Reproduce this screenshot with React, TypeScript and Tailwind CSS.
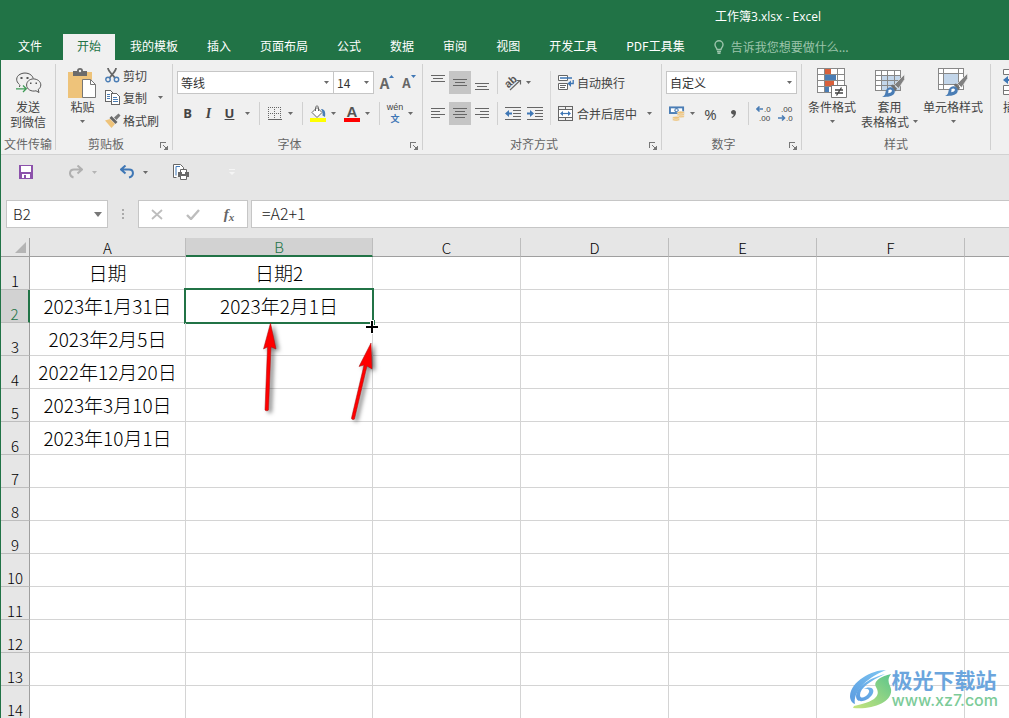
import React, { useState } from 'react'
import { clsx } from 'clsx'

const TABS = ['开始', '我的模板', '插入', '页面布局', '公式', '数据', '审阅', '视图', '开发工具', 'PDF工具集']
const COLUMNS = ['A', 'B', 'C', 'D', 'E', 'F', '']
const ROW_COUNT = 14

const CELLS: Record<string, string> = {
  A1: '日期',
  B1: '日期2',
  A2: '2023年1月31日',
  B2: '2023年2月1日',
  A3: '2023年2月5日',
  A4: '2022年12月20日',
  A5: '2023年3月10日',
  A6: '2023年10月1日',
}

function Caret({ className = 'text-[#6a6a6a]' }: { className?: string }) {
  return (
    <svg width="5" height="3" viewBox="0 0 5 3" className={className} aria-hidden="true">
      <path d="M0 0h5L2.5 3z" fill="currentColor" />
    </svg>
  )
}

function CaretButton({ label, className }: { label: string; className?: string }) {
  return (
    <button aria-label={label} className={clsx('flex h-[23px] w-[14px] shrink-0 items-center justify-center', className)}>
      <Caret />
    </button>
  )
}

function Sep({ className = 'ml-1' }: { className?: string }) {
  return <div className={clsx('mr-[7px] h-[23px] w-px shrink-0 bg-[#d0d0d0]', className)} />
}

function IconButton({ label, children, className = 'w-4' }: { label: string; children: React.ReactNode; className?: string }) {
  return (
    <button aria-label={label} className={clsx('flex h-[23px] shrink-0 items-center justify-center', className)}>
      {children}
    </button>
  )
}

interface GroupProps {
  title: string
  className: string
  launcher?: boolean
  children: React.ReactNode
}

function Group({ title, className, launcher = true, children }: GroupProps) {
  return (
    <section className={clsx('relative flex h-[86px] shrink-0 flex-col border-r border-[#d0d0d0]', className)}>
      <div className="min-h-0 flex-1">{children}</div>
      <h2 className={clsx('text-center text-xs leading-3 whitespace-nowrap text-[#666]', launcher && 'pr-4')}>{title}</h2>
      {launcher && (
        <button aria-label={title + '设置'} className="absolute right-1 bottom-0">
          <svg width="8" height="8" viewBox="0 0 8 8" fill="none" stroke="#777" shapeRendering="crispEdges">
            <path d="M.5 6V.5H6M3 3l3 3M7.5 3.500v4H3.500" />
            <path d="M7 4v3H4z" fill="#777" stroke="none" />
          </svg>
        </button>
      )}
    </section>
  )
}

function Select({ label, value, className }: { label: string; value: string; className: string }) {
  return (
    <div className={clsx('relative h-[23px] shrink-0', className)}>
      <select aria-label={label} className="h-full w-full appearance-none border border-[#c6c6c6] bg-white pl-[3px] text-[#333]">
        <option>{value}</option>
      </select>
      <span className="pointer-events-none absolute inset-y-0 right-[5px] flex items-center">
        <Caret />
      </span>
    </div>
  )
}

// horizontal rules of an alignment icon, each one as [x, width]
function Lines({ rows, top }: { rows: [number, number][]; top: number }) {
  return (
    <svg width="14" height="15" viewBox="0 0 14 15" fill="#666" shapeRendering="crispEdges">
      {rows.map(([x, w], i) => (
        <rect key={i} x={x} y={top + i * 3} width={w} height="1" />
      ))}
    </svg>
  )
}

function WeChatIcon() {
  return (
    <svg width="27" height="24" viewBox="0 0 27 24" fill="none">
      <path d="M4.500 12.500C.5 9.500.8 4.500 5 2.300 10-.5 17 1.500 18.300 6.500M5 13l-.6 2" stroke="#555" />
      <path d="M18.500 6.900c4 .1 7.300 2.700 7.300 6 0 1.900-1 3.500-2.600 4.600l.8 3-3-1.700c-4.700 1.200-9.400-1.500-9.400-5.800 0-3.400 3-6.100 6.900-6.100z" stroke="#555" />
      <path d="M5.500 5h2v2h-2zM11.500 5h2v2h-2zM15 10.500h1.500V12H15zM20.500 10.500H22V12h-1.500z" fill="#555" />
      <path d="M1 16.800h10M8 13.500l3.300 3.300L8 20" stroke="#3f9b56" strokeWidth="1.300" />
    </svg>
  )
}

function PasteIcon() {
  return (
    <svg width="29" height="31" viewBox="0 0 29 31">
      <path d="M0 4h24v26H0z" fill="#eec37a" />
      <path d="M5 8V3h4a3 3 0 0 1 6 0h4v5z" fill="#6b6b6b" />
      <circle cx="12" cy="3" r="1.200" fill="#f0f0f0" />
      <path d="M14.500 11.500h8l5 5v13h-13z" fill="#fff" stroke="#777" />
      <path d="M22.500 11.500v5h5" fill="none" stroke="#777" />
    </svg>
  )
}

function CutIcon() {
  return (
    <svg width="15" height="16" viewBox="0 0 15 16" fill="none">
      <path d="M3 1c0 3 4 6 7 10M11 1C11 4 8 6 4.500 11" stroke="#666" strokeWidth="1.800" />
      <circle cx="3" cy="12.500" r="2.200" stroke="#4a7db5" strokeWidth="1.400" />
      <circle cx="11.500" cy="12.500" r="2.200" stroke="#4a7db5" strokeWidth="1.400" />
    </svg>
  )
}

function CopyIcon() {
  return (
    <svg width="16" height="15" viewBox="0 0 16 15" shapeRendering="crispEdges">
      <path d="M.5.5h5l3 3v8h-8z" fill="#fff" stroke="#666" />
      <path d="M2 4.500h3M2 6.500h3M2 8.500h3" stroke="#4a7db5" />
      <path d="M6.500 3.500h5l3 3v8h-8z" fill="#fff" stroke="#666" />
      <path d="M8 7.500h4M8 9.500h5M8 11.500h5" stroke="#4a7db5" />
    </svg>
  )
}

function PainterIcon() {
  return (
    <svg width="16" height="15" viewBox="0 0 16 15">
      <path d="M0 7.500 5 6l5 5-3.500 4z" fill="#eec37a" />
      <path d="m4.500 5 2-2 6 6-2 2z" fill="#666" />
      <path d="m9 4.500 4.500-4 2 2-4 4.500z" fill="#777" />
    </svg>
  )
}

function BucketIcon() {
  return (
    <svg width="16" height="17" viewBox="0 0 16 17">
      <path d="m2 7.500 5-5 5 5-5 5z" fill="#fff" stroke="#666" />
      <path d="M5.500 6V2.500c0-2 3-2 3 0V6" fill="none" stroke="#666" />
      <path d="M11 4c3 0 5 2 4 8l-2.500-1.500c.5-3-.5-5-1.500-6.500z" fill="#4a7db5" />
      <path d="M0 13h16v4H0z" fill="#ff0" />
    </svg>
  )
}

function MoneyIcon() {
  return (
    <svg width="17" height="17" viewBox="0 0 17 17">
      <path d="M0 1h16v8H0z" fill="#4a7db5" />
      <path d="M2 3h12v4H2z" fill="#fff" />
      <circle cx="8" cy="5" r="2.300" fill="#4a7db5" />
      <path d="M7 4h2v2H7z" fill="#fff" />
      <g fill="#eec37a" stroke="#f0f0f0" strokeWidth=".6">
        <ellipse cx="12.500" cy="11.500" rx="3.800" ry="1.600" />
        <ellipse cx="12.500" cy="9.500" rx="3.800" ry="1.600" />
        <ellipse cx="12.500" cy="7.500" rx="3.800" ry="1.600" />
        <ellipse cx="7.500" cy="15" rx="3.800" ry="1.600" />
        <ellipse cx="7.500" cy="13" rx="3.800" ry="1.600" />
      </g>
    </svg>
  )
}

function DecimalIcon({ increase }: { increase?: boolean }) {
  return (
    <svg width="16" height="19" viewBox="0 0 16 19" fontFamily="Liberation Sans, sans-serif" fontSize="8" fill="#444">
      <text x={increase ? 8 : 3} y="8">{increase ? '.0' : '.00'}</text>
      <text x={increase ? 3 : 8} y="17">{increase ? '.00' : '.0'}</text>
      {increase ? (
        <path d="M3.500 2.500 1 5l2.500 2.500M1 5h6" stroke="#4a7db5" strokeWidth="1.600" fill="none" />
      ) : (
        <path d="M4 11.500 6.500 14 4 16.500M0 14h6.500" stroke="#4a7db5" strokeWidth="1.600" fill="none" />
      )}
    </svg>
  )
}

function IndentIcon({ outward }: { outward?: boolean }) {
  return (
    <svg width="16" height="14" viewBox="0 0 16 14">
      <path d="M0 .5h16M8 3.500h8M8 6.500h8M8 9.500h8M0 12.500h16" stroke="#666" shapeRendering="crispEdges" />
      <path d={outward ? 'M0 6.500 4 3v2.500h3v2H4V10z' : 'M7 6.500 3 3v2.500H0v2h3V10z'} fill="#3f77b5" />
    </svg>
  )
}

function WrapIcon() {
  return (
    <svg width="16" height="16" viewBox="0 0 16 16" fill="none">
      <path d="M.5.5h9v5h-9z" stroke="#666" fill="#fff" />
      <path d="M.5 8.500h9v6h-9z" stroke="#666" fill="#fff" />
      <path d="M2 10.500h6M2 12.500h5" stroke="#666" />
      <path d="M2 3h12M15.200 5v3.500H11" stroke="#3f77b5" strokeWidth="1.300" />
      <path d="m9.500 8.500 3.500-3V12z" fill="#3f77b5" />
    </svg>
  )
}

function MergeIcon() {
  return (
    <svg width="16" height="16" viewBox="0 0 16 16" fill="none">
      <path d="M.5.5h14v14H.5zM.5 3.500h14M.5 11.500h14M7.500 0v3.500M7.500 11.500V15" stroke="#666" shapeRendering="crispEdges" />
      <path d="M1 4h13v7H1z" fill="#fff" />
      <path d="M3 7.500h9" stroke="#3f77b5" strokeWidth="1.200" />
      <path d="m2 7.500 3-2.500v5zM13 7.500 10 5v5z" fill="#3f77b5" />
    </svg>
  )
}

function OrientationIcon() {
  return (
    <svg width="18" height="18" viewBox="0 0 18 18" className="shrink-0 overflow-visible">
      <text x="1" y="12" fontSize="11" fontWeight="bold" fontFamily="Liberation Sans, sans-serif" fill="#555" transform="rotate(-42 6 9)">ab</text>
      <path d="M6 16 16 6.500M12.500 6.500H16.500V10.500" fill="none" stroke="#666" strokeWidth="1.200" />
    </svg>
  )
}

function ConditionalIcon() {
  return (
    <svg width="30" height="31" viewBox="0 0 30 31">
      <path d="M.5.5h27v24H.5z" fill="#fff" />
      <path d="M8 1h6v5H8z M8 13h9v5H8z" fill="#d9603b" />
      <path d="M8 7h11v5H8zM8 19h4v5H8z" fill="#4a7db5" />
      <path d="M.5.5h27v24H.5zM.5 6.500h27M.5 12.500h27M.5 18.500h27M7.500 0v24M20.500 0v24" fill="none" stroke="#888" shapeRendering="crispEdges" />
      <path d="M14.500 17.500h15v12h-15z" fill="#fff" stroke="#777" />
      <path d="M18 22h8M18 25h8M24.500 19.500l-5 8" stroke="#444" strokeWidth="1.300" />
    </svg>
  )
}

function Brush() {
  return (
    <>
      <path d="m29.500 5.500-10 10 4 4 6-9z" fill="#808080" stroke="#f0f0f0" strokeWidth=".6" />
      <path d="m15.500 16.500 2.500-1 4 4-1.500 3z" fill="#707070" />
      <path d="M7 28c5-1.500 2-6.500 6-9 3.500-2 8 1 6.500 5-1.500 3.500-6.500 4-12.500 4z" fill="#4a7db5" />
      <path d="M13.500 21c2-1.500 4.500 0 3 1.800-.8 1-2.200 1.400-3.500 1.500.8-1 .2-2.200.5-3.300z" fill="#fff" />
    </>
  )
}

function TableFormatIcon() {
  return (
    <svg width="30" height="29" viewBox="0 0 30 29">
      <path d="M.5 1.500h25v20H.5z" fill="#fff" />
      <path d="M7 7h19v15H7z" fill="#c3d6ea" />
      <path d="M.5 1.500h25v20H.5zM.5 6.500h25M.5 11.500h25M.5 16.500h25M6.500 1v21M12.500 1v21M19.500 1v21" fill="none" stroke="#888" shapeRendering="crispEdges" />
      <Brush />
    </svg>
  )
}

function CellStyleIcon() {
  return (
    <svg width="30" height="29" viewBox="0 0 30 29">
      <path d="M.5.5h25v21H.5z" fill="#fff" />
      <path d="M6 6h14v10H6z" fill="#c3d6ea" />
      <path d="M.5.5h25v21H.5zM.5 5.500h25M.5 16.500h25M5.500 0v22M20.500 0v22" fill="none" stroke="#888" shapeRendering="crispEdges" />
      <Brush />
    </svg>
  )
}

function InsertIcon() {
  return (
    <svg width="28" height="28" viewBox="0 0 28 28">
      <path d="M.5 1.500h27v5H.5zM.5 17.500h27v9H.5zM.5 22.500h27" fill="#fff" stroke="#777" />
      <path d="m0 12 5-4v3h6v2H5v3z" fill="#3f77b5" />
    </svg>
  )
}

function Ribbon() {
  return (
    <div className="flex h-[95px] overflow-hidden border-b border-[#d2d2d2] bg-[#f0f0f0] pt-1 text-xs text-[#444]">
      <Group title="文件传输" className="w-[55px]" launcher={false}>
        <button className="flex w-full flex-col items-center pt-1 leading-[15px]">
          <span className="flex h-[31px] items-center"><WeChatIcon /></span>
          <span>发送</span>
          <span>到微信</span>
        </button>
      </Group>

      <Group title="剪贴板" className="w-[117px]">
        <div className="flex pl-3">
          <button className="flex w-[29px] flex-col items-center pt-1 leading-[15px]">
            <span className="h-[31px]"><PasteIcon /></span>
            <span className="whitespace-nowrap">粘贴</span>
            <span className="flex h-[15px] items-center"><Caret /></span>
          </button>
          <div className="ml-2 flex flex-col">
            <button className="flex h-[22px] items-center gap-[3px] leading-[15px]"><CutIcon />剪切</button>
            <div className="flex h-[23px] items-center">
              <button className="flex items-center gap-0.5 leading-[15px]"><CopyIcon />复制</button>
              <CaretButton label="复制选项" className="ml-1.5" />
            </div>
            <button className="flex h-[23px] items-center gap-0.5 leading-[15px]"><PainterIcon />格式刷</button>
          </div>
        </div>
      </Group>

      <Group title="字体" className="w-[250px]">
        <div className="flex flex-col gap-2 pl-1 pt-[7px]">
          <div className="flex">
            <Select label="字体" value="等线" className="w-[157px]" />
            <Select label="字号" value="14" className="-ml-px w-[41px]" />
            <IconButton label="增大字号" className="ml-0.5 w-[22px]">
              <span className="text-[15px] font-bold text-[#666]">A</span>
              <svg width="5" height="3" viewBox="0 0 5 3" className="mb-3"><path d="M0 3h5L2.500 0z" fill="#3f77b5" /></svg>
            </IconButton>
            <IconButton label="减小字号" className="w-[22px]">
              <span className="text-[13px] font-bold text-[#666]">A</span>
              <Caret className="mb-3 text-[#3f77b5]" />
            </IconButton>
          </div>
          <div className="flex">
            <IconButton label="加粗" className="w-[21px]"><span className="font-['Open_Sans',sans-serif] text-[13px] font-bold">B</span></IconButton>
            <IconButton label="倾斜" className="w-[21px]"><span className="font-['Liberation_Serif',serif] text-sm font-bold italic">I</span></IconButton>
            <IconButton label="下划线" className="w-[21px]"><span className="font-['Open_Sans',sans-serif] text-[13px] font-bold underline">U</span></IconButton>
            <CaretButton label="下划线选项" />
            <Sep className="ml-[5px]" />
            <IconButton label="边框">
              <svg width="14" height="14" viewBox="0 0 14 14" fill="none" stroke="#666" shapeRendering="crispEdges">
                <path d="M.5 0v13M6.500 0v13M12.500 0v13M0 .5h13M0 6.500h13" strokeDasharray="1 1" />
                <path d="M0 12.500h14" />
              </svg>
            </IconButton>
            <CaretButton label="边框选项" />
            <Sep className="ml-[5px]" />
            <IconButton label="填充颜色"><BucketIcon /></IconButton>
            <CaretButton label="填充颜色选项" />
            <IconButton label="字体颜色" className="ml-1 w-4">
              <span className="w-4 border-b-4 border-[#f00] font-['Liberation_Sans',sans-serif] text-[15px] leading-[13px] font-bold text-[#555]">A</span>
            </IconButton>
            <CaretButton label="字体颜色选项" />
            <Sep className="ml-[5px]" />
            <IconButton label="拼音">
              <span className="flex flex-col items-center">
                <span className="font-['Liberation_Sans',sans-serif] text-[9px] leading-[10px]">wén</span>
                <span className="text-[9px] leading-[13px] font-bold text-[#3f77b5]">文</span>
              </span>
            </IconButton>
            <CaretButton label="拼音选项" />
          </div>
        </div>
      </Group>

      <Group title="对齐方式" className="w-[239px]">
        <div className="flex pl-1 pt-[7px]">
          <div className="flex flex-col gap-2">
            <div className="flex">
              <IconButton label="顶端对齐" className="w-[22px]"><Lines top={0} rows={[[0, 14], [2, 10], [0, 14]]} /></IconButton>
              <IconButton label="垂直居中" className="w-[22px] bg-[#c5c5c5]"><Lines top={4} rows={[[0, 14], [2, 10], [0, 14]]} /></IconButton>
              <IconButton label="底端对齐" className="w-[22px]"><Lines top={8} rows={[[0, 14], [2, 10], [0, 14]]} /></IconButton>
              <Sep />
              <IconButton label="方向"><OrientationIcon /></IconButton>
              <CaretButton label="方向选项" />
            </div>
            <div className="flex">
              <IconButton label="左对齐" className="w-[22px]"><Lines top={2} rows={[[0, 14], [0, 9], [0, 14], [0, 9]]} /></IconButton>
              <IconButton label="居中" className="w-[22px] bg-[#c5c5c5]"><Lines top={2} rows={[[0, 14], [2, 10], [0, 14], [2, 10]]} /></IconButton>
              <IconButton label="右对齐" className="w-[22px]"><Lines top={2} rows={[[0, 14], [5, 9], [0, 14], [5, 9]]} /></IconButton>
              <Sep />
              <IconButton label="减少缩进量"><IndentIcon outward /></IconButton>
              <IconButton label="增加缩进量" className="ml-1.5 w-4"><IndentIcon /></IconButton>
            </div>
          </div>
          <div className="mr-[7px] ml-[7px] w-px bg-[#d8d8d8]" />
          <div className="flex flex-col gap-2">
            <button className="flex h-[23px] items-center gap-[3px]"><WrapIcon />自动换行</button>
            <div className="flex">
              <button className="flex h-[23px] items-center gap-[3px]"><MergeIcon />合并后居中</button>
              <CaretButton label="合并选项" className="ml-[5px]" />
            </div>
          </div>
        </div>
      </Group>

      <Group title="数字" className="w-[140px]">
        <div className="flex flex-col gap-2 pl-1 pt-[7px]">
          <Select label="数字格式" value="自定义" className="w-[131px]" />
          <div className="flex pl-[3px]">
            <IconButton label="会计数字格式"><MoneyIcon /></IconButton>
            <CaretButton label="会计数字格式选项" />
            <IconButton label="百分比样式" className="w-[23px]"><span className="font-['Open_Sans',sans-serif] text-[15px]">%</span></IconButton>
            <IconButton label="千位分隔样式" className="w-[22px]">
              <svg width="5" height="8" viewBox="0 0 5 8"><path d="M2.500 0C4 0 5 1 5 2.500 5 5 3.500 7 1 8l-.5-1C2 6.500 2.600 5.500 2.600 4.500 1 4.600 0 3.600 0 2.300 0 1 1 0 2.500 0z" fill="#555" /></svg>
            </IconButton>
            <Sep />
            <IconButton label="增加小数位数"><DecimalIcon increase /></IconButton>
            <IconButton label="减少小数位数" className="ml-1.5 w-4"><DecimalIcon /></IconButton>
          </div>
        </div>
      </Group>

      <Group title="样式" className="w-[189px]" launcher={false}>
        <div className="flex gap-[5px] pl-1.5 pt-1 leading-[15px] whitespace-nowrap">
          <button className="flex w-12 flex-col items-center">
            <span className="h-[31px]"><ConditionalIcon /></span>
            <span>条件格式</span>
            <span className="flex h-[15px] items-center"><Caret /></span>
          </button>
          <button className="flex w-[57px] flex-col items-center">
            <span className="flex h-[31px] items-center"><TableFormatIcon /></span>
            <span>套用</span>
            <span className="flex items-center gap-1">表格格式<Caret /></span>
          </button>
          <button className="flex w-[60px] flex-col items-center">
            <span className="h-[31px]"><CellStyleIcon /></span>
            <span>单元格样式</span>
            <span className="flex h-[15px] items-center"><Caret /></span>
          </button>
        </div>
      </Group>

      <div className="shrink-0 pl-3 pt-1 leading-[15px]">
        <button className="flex flex-col items-start">
          <span className="h-[31px]"><InsertIcon /></span>
          <span>插入</span>
        </button>
      </div>
    </div>
  )
}

function QuickAccess() {
  return (
    <div className="flex h-[34px] items-center pl-[18px]">
      <button aria-label="保存">
        <svg width="14" height="14" viewBox="0 0 14 14">
          <path d="M0 0h14v14H0z" fill="#8c52ab" />
          <path d="M2 1h10v6H2zM3 9h8v4H3z" fill="#fff" />
          <path d="M5 10h2v3H5z" fill="#8c52ab" />
        </svg>
      </button>
      <button aria-label="恢复" className="ml-9">
        <svg width="14" height="14" viewBox="0 0 14 14" fill="none" stroke="#b0b0b0" strokeWidth="2">
          <path d="M8.500.5 13 4.500l-4.500 4M13 4.500H5C0 4.500-.5 11 4.500 12.500" />
        </svg>
      </button>
      <CaretButton label="恢复选项" className="ml-1 opacity-40" />
      <button aria-label="撤消" className="ml-[19px]">
        <svg width="14" height="14" viewBox="0 0 14 14" fill="none" stroke="#3f77b5" strokeWidth="2">
          <path d="M5.500.5 1 4.500l4.500 4M1 4.500h8C14 4.500 14.500 11 9 12.500" />
        </svg>
      </button>
      <CaretButton label="撤消选项" className="ml-1" />
      <button aria-label="打印预览" className="ml-[21px]">
        <svg width="17" height="16" viewBox="0 0 17 16">
          <path d="M3.500 13.500h-3V.5h7l3 3V6" fill="#fff" stroke="#666" />
          <path d="M3 11.500V2.500h4" fill="none" stroke="#3f77b5" />
          <path d="M7.500 5.500h6v4h-6z" fill="#fff" stroke="#666" />
          <path d="M5 8h11v5H5z" fill="#666" />
          <path d="M7.500 11.500h6v4h-6z" fill="#fff" stroke="#666" />
          <path d="M9 7h3v3H9z" fill="#fff" />
        </svg>
      </button>
      <button aria-label="自定义快速访问工具栏" className="ml-[39px]">
        <svg width="6" height="6" viewBox="0 0 6 6"><path d="M0 0h6v1H0zM0 3h6L3 6z" fill="#f5f5f5" /></svg>
      </button>
    </div>
  )
}

function FormulaBar() {
  return (
    <div className="flex h-7 pl-[5px]">
      <div className="relative w-[102px] shrink-0">
        <input aria-label="名称框" defaultValue="B2" className="h-full w-full border border-[#c6c6c6] bg-white pb-0.5 pl-1.5 text-[15px] font-light text-[#222]" />
        <span className="pointer-events-none absolute inset-y-0 right-1.5 flex items-center">
          <svg width="8" height="5" viewBox="0 0 8 5"><path d="M0 0h8L4 5z" fill="#777" /></svg>
        </span>
      </div>
      <div className="flex w-[30px] shrink-0 flex-col items-center justify-center gap-0.5">
        <span className="h-0.5 w-0.5 bg-[#aaa]" />
        <span className="h-0.5 w-0.5 bg-[#aaa]" />
        <span className="h-0.5 w-0.5 bg-[#aaa]" />
      </div>
      <div className="flex w-[110px] shrink-0 border border-[#c6c6c6] bg-white">
        <button aria-label="取消" className="flex w-9 items-center justify-center">
          <svg width="12" height="11" viewBox="0 0 12 11"><path d="m1 1 10 9M11 1 1 10" stroke="#bdbdbd" strokeWidth="1.800" /></svg>
        </button>
        <button aria-label="输入" className="flex w-9 items-center justify-center">
          <svg width="14" height="11" viewBox="0 0 14 11"><path d="m1 6 4 4 8-9" fill="none" stroke="#bdbdbd" strokeWidth="2.400" /></svg>
        </button>
        <button aria-label="插入函数" className="flex w-9 items-center justify-center font-['Liberation_Serif',serif] text-[15px] font-bold text-[#666] italic">
          f<sub className="text-[11px]">x</sub>
        </button>
      </div>
      <input aria-label="编辑栏" defaultValue="=A2+1" className="ml-[3px] min-w-0 flex-1 border border-r-0 border-[#c6c6c6] bg-white pb-0.5 pl-2.5 text-base font-light text-[#222]" />
    </div>
  )
}

function Annotations() {
  return (
    <svg className="pointer-events-none absolute top-0 left-0 h-[200px] w-[400px]" viewBox="1 238 400 200" aria-hidden="true">
      <path d="M370 320h4v14h-4z" fill="#fff" />
      <path d="M365 325h13v4h-13z" fill="#fff" />
      <path d="M371 321h2v12h-2zM366 326h12v2h-12z" fill="#000" />
      <path d="M374 320h1v5h-1z" fill="#217346" />
      <g fill="#f00" stroke="#a01010" strokeWidth=".5" className="drop-shadow-[3px_2px_2px_rgba(0,0,0,0.5)]">
        <path d="M270.500 323 276 349l-5-2-2.500 63c0 1-3.500 1-3.500 0l2.500-63-4 2z" />
        <path d="m371 343 1 26-5-3-12.500 53c-.5 1-3.500.5-3-1L364 365l-5 1.500z" />
      </g>
    </svg>
  )
}

function Sheet() {
  return (
    <div className="relative mt-2.5 min-h-0 flex-1 overflow-hidden bg-white">
      <table className="w-full table-fixed border-separate border-spacing-0">
        <colgroup>
          <col className="w-[29px]" />
          <col className="w-[156px]" />
          <col className="w-[187px]" />
          <col className="w-[148px]" />
          <col className="w-[148px]" />
          <col className="w-[148px]" />
          <col className="w-[148px]" />
          <col />
        </colgroup>
        <thead>
          <tr className="h-[19px] bg-[#e6e6e6] text-[15px] leading-[18px] text-black">
            <td className="border-r border-b border-[#9f9f9f] p-0">
              <svg width="11" height="11" viewBox="0 0 11 11" className="ml-auto mr-[3px]"><path d="M11 0v11H0z" fill="#b4b4b4" /></svg>
            </td>
            {COLUMNS.map((name) => (
              <th
                key={name}
                scope="col"
                className={clsx(
                  'border-r border-r-[#bdbdbd] p-0 font-light last:border-r-0',
                  name === 'B' ? 'border-b-2 border-b-[#217346] bg-[#d2d2d2] text-[#217346]' : 'border-b border-b-[#9f9f9f]',
                )}
              >
                <div className="h-[17px]">{name}</div>
              </th>
            ))}
          </tr>
        </thead>
        <tbody>
          {Array.from({ length: ROW_COUNT }, (_, i) => i + 1).map((row) => (
            <tr key={row} className="h-[33px]">
              <th
                scope="row"
                className={clsx(
                  'border-b border-b-[#bdbdbd] p-0 align-bottom text-[15px] leading-4 font-light',
                  row === 2 ? 'border-r-2 border-r-[#217346] bg-[#d2d2d2] text-[#217346]' : 'border-r border-r-[#9f9f9f] bg-[#e6e6e6] text-black',
                )}
              >
                {row}
              </th>
              {COLUMNS.map((name) => (
                <td key={name} className="relative border-r border-b border-[#d4d4d4] p-0 text-center text-[19px] leading-8 font-light whitespace-nowrap text-black last:border-r-0">
                  {CELLS[name + row]}
                  {name + row === 'B2' && <span className="absolute -inset-0.5 border-2 border-[#217346]" />}
                </td>
              ))}
            </tr>
          ))}
        </tbody>
      </table>
      <Annotations />
    </div>
  )
}

function Watermark() {
  return (
    <div className="pointer-events-none absolute right-[11px] bottom-2 flex items-center">
      <svg width="42" height="41" viewBox="0 0 42 41">
        <defs>
          <linearGradient id="sky" x1="0" y1="1" x2="1" y2="0">
            <stop offset="0" stopColor="#5b9be0" />
            <stop offset="1" stopColor="#7cc6f2" />
          </linearGradient>
          <linearGradient id="leaf" x1="0" y1="1" x2="1" y2="0">
            <stop offset="0" stopColor="#c8e47c" />
            <stop offset="1" stopColor="#5cc58c" />
          </linearGradient>
        </defs>
        <path d="M36 1C22 1 1 12 0 27c0 4 2 7 5 8C3 24 14 10 36 1z" fill="url(#sky)" />
        <path d="M35 5C20 9 7 17 6 27c0 8 11 6 16-1 4-6-1-10-9-6 5-1 8 1 5 5-3 4-8 5-8 1C10 19 20 12 35 5z" fill="url(#sky)" />
        <path d="M41 5C29 8 23 13 26 18c4 7 3 14-22 19l-1 2c20 2 40-6 38-19-1-5-5-8 0-15z" fill="url(#leaf)" />
      </svg>
      <div className="flex flex-col">
        <span className="text-[21px] leading-[22px] font-bold text-[#6ba5dd]">极光下载站</span>
        <span className="font-['Inter',sans-serif] text-base leading-5 font-medium text-[#7ccb98]">www.xz7.com</span>
      </div>
    </div>
  )
}

export default function App() {
  const [activeTab, setActiveTab] = useState('开始')

  return (
    <div className="relative flex h-screen flex-col overflow-hidden border-l border-[#217346] bg-[#e6e6e6] font-['Noto_Sans_CJK_SC',sans-serif]">
      <header className="bg-[#217346] text-xs text-white">
        <div className="flex h-[34px] items-center justify-center pl-[526px]">
          <h1 className="font-['Open_Sans','Noto_Sans_CJK_SC',sans-serif]">工作簿3.xlsx - Excel</h1>
        </div>
        <nav className="flex h-[26px] gap-px whitespace-nowrap">
          <button className="shrink-0 pr-5 pb-[3px] pl-[17px]">文件</button>
          {TABS.map((tab) => (
            <button
              key={tab}
              onClick={() => setActiveTab(tab)}
              className={clsx('shrink-0 px-3.5 pb-[3px]', tab === activeTab && 'bg-[#f0f0f0] text-[#217346]')}
            >
              {tab}
            </button>
          ))}
          <label className="ml-[14px] flex items-center gap-[7px] pb-px text-[#9cc4ab]">
            <svg width="10" height="14" viewBox="0 0 10 14" fill="none" stroke="currentColor" strokeWidth="1.400">
              <path d="M3 9.500C3 8 1 7 1 4.700a4 4 0 0 1 8 0C9 7 7 8 7 9.500zM3 11.500h4M3.500 13.300h3" />
            </svg>
            <input aria-label="告诉我您想要做什么" placeholder="告诉我您想要做什么..." className="w-36 bg-transparent outline-none placeholder:text-[#9cc4ab]" />
          </label>
        </nav>
      </header>
      <Ribbon />
      <QuickAccess />
      <div className="mt-[11px]">
        <FormulaBar />
      </div>
      <Sheet />
      <Watermark />
    </div>
  )
}
